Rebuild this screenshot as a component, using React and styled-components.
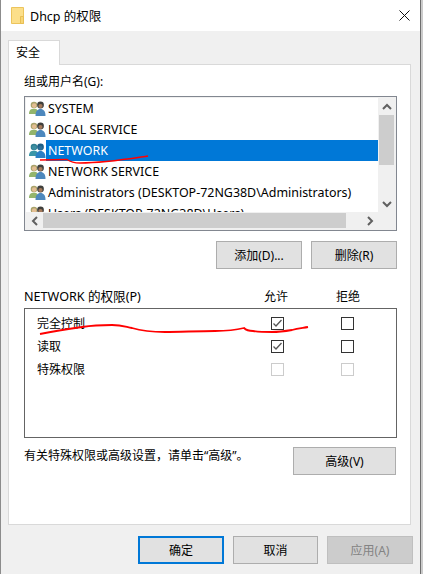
import React from "react";
import styled, { createGlobalStyle } from "styled-components";

const GlobalStyle = createGlobalStyle`
  html, body {
    margin: 0;
    padding: 0;
    background: #cbcbcb;
  }
  * {
    box-sizing: border-box;
  }
`;

const Dialog = styled.div`
  position: relative;
  width: 421px;
  height: 574px;
  overflow: hidden;
  display: flex;
  flex-direction: column;
  background: #f0f0f0;
  border-left: 1px solid #8c8c8c;
  border-right: 1px solid #6e6e6e;
  font-family: "Noto Sans", "Noto Sans CJK SC", sans-serif;
  font-size: 12px;
  color: #000;
`;

const TitleBar = styled.div`
  display: flex;
  align-items: center;
  height: 31px;
  padding: 0 10px 0 10px;
  background: #fff;
  font-size: 12.5px;
`;

const TitleText = styled.span`
  margin-left: 6px;
  flex: 1;
`;

const Body = styled.div`
  flex: 1;
  display: flex;
  flex-direction: column;
  padding: 9px 9px 0 7px;
`;

const TabStrip = styled.div`
  display: flex;
  height: 25px;
  margin-bottom: -1px;
`;

const Tab = styled.div`
  width: 52px;
  padding: 2px 0 0 7px;
  background: #fff;
  border: 1px solid #d9d9d9;
  border-bottom: none;
  position: relative;
  z-index: 1;
`;

const Panel = styled.div`
  height: 461px;
  display: flex;
  flex-direction: column;
  padding: 8px 13px 0 15px;
  background: #fff;
  border: 1px solid #d9d9d9;
`;

const FieldLabel = styled.div`
  height: 23px;
  line-height: 17px;
`;

const UserList = styled.div`
  height: 135px;
  width: 373px;
  display: grid;
  grid-template-columns: 1fr 17px;
  grid-template-rows: 1fr 17px;
  padding: 1px;
  border: 1px solid #828790;
  background: #f0f0f0;
`;

const Rows = styled.div`
  overflow: hidden;
  background: #fff;
`;

const UserRow = styled.div`
  display: flex;
  align-items: center;
  height: 21px;
  padding-left: 3px;
  white-space: nowrap;
`;

const UserName = styled.span`
  flex: 1;
  height: 21px;
  line-height: 21px;
  padding-left: 2px;
  font-size: 12.45px;
  color: ${(p) => (p.$selected ? "#fff" : "#000")};
  background: ${(p) => (p.$selected ? "#0078d7" : "transparent")};
`;

const VScroll = styled.div`
  display: flex;
  flex-direction: column;
  align-items: center;
  background: #f0f0f0;
`;

const HScroll = styled.div`
  display: flex;
  align-items: center;
  background: #f0f0f0;
`;

const ScrollArrow = styled.div`
  flex: none;
  width: 17px;
  height: 17px;
  display: flex;
  align-items: center;
  justify-content: center;
`;

const VThumb = styled.div`
  width: 15px;
  height: 50px;
  background: #cdcdcd;
`;

const HThumb = styled.div`
  width: 303px;
  height: 15px;
  background: #cdcdcd;
`;

const Spacer = styled.div`
  flex: 1;
`;

const ButtonRow = styled.div`
  display: flex;
  justify-content: flex-end;
  gap: 9px;
  width: 373px;
  margin-top: 10px;
`;

const Button = styled.div`
  flex: none;
  width: ${(p) => p.$width || 86}px;
  height: 28px;
  display: flex;
  align-items: center;
  justify-content: center;
  background: ${(p) => (p.$disabled ? "#cccccc" : "#e1e1e1")};
  color: ${(p) => (p.$disabled ? "#838383" : "#000")};
  border: ${(p) =>
    p.$default
      ? "2px solid #0078d7"
      : p.$disabled
        ? "1px solid #bfbfbf"
        : "1px solid #adadad"};
`;

const PermHeader = styled.div`
  display: grid;
  grid-template-columns: 1fr 72px 72px 13px;
  width: 373px;
  height: 21px;
  margin-top: 18px;
  padding-top: 1px;
  line-height: 17px;
`;

const PermTitle = styled.span`
  font-size: 12.6px;
  white-space: nowrap;
`;

const ColTitle = styled.span`
  text-align: center;
`;

const PermBox = styled.div`
  width: 373px;
  height: 130px;
  padding-top: 3px;
  border: 1px solid #646464;
`;

const PermRow = styled.div`
  display: grid;
  grid-template-columns: 1fr 13px 13px;
  column-gap: 57px;
  align-items: center;
  height: 23px;
  padding: 0 42px 0 12px;
`;

const PermName = styled.span`
  line-height: 17px;
  margin-top: -1px;
`;

const CheckBox = styled.div`
  width: 13px;
  height: 13px;
  display: flex;
  align-items: center;
  justify-content: center;
  background: #fff;
  border: 1px solid ${(p) => (p.$disabled ? "#cccccc" : "#333333")};
`;

const HelpRow = styled.div`
  display: flex;
  justify-content: space-between;
  width: 372px;
  margin-top: 9px;
`;

const HelpText = styled.span`
  line-height: 17px;
`;

const Footer = styled.div`
  display: flex;
  justify-content: flex-end;
  gap: 9px;
  margin: 11px -2px 0 0;
`;

const Scribbles = styled.svg`
  position: absolute;
  left: -1px;
  top: 0;
  pointer-events: none;
`;

function FolderIcon() {
  return (
    <svg width="13" height="17" viewBox="0 0 13 17">
      <path d="M.5.5h12v16H.5z" fill="#fcdf8a" stroke="#ecc45c" />
      <path d="M9.5 9.5h3v7h-3z" fill="#f8d675" stroke="#e8bf55" />
    </svg>
  );
}

function CloseIcon() {
  return (
    <svg width="11" height="11" viewBox="0 0 11 11">
      <path d="M.5.5l10 10M10.5.5l-10 10" stroke="#111" strokeWidth="1" fill="none" />
    </svg>
  );
}

function Users({ selected }) {
  const hair = selected ? "#2f7f92" : "#a8a26a";
  const face = selected ? "#3f8fa2" : "#e3bd92";
  const backBody = selected ? "#3a96a8" : "#93b56c";
  const frontHair = selected ? "#1d5f86" : "#3f3f3c";
  const frontFace = selected ? "#2c6f98" : "#a5795a";
  const frontBody = selected ? "#2a7fc4" : "#4d88bd";
  return (
    <svg width="17" height="15" viewBox="0 0 17 15">
      <circle cx="5" cy="4" r="3.3" fill={hair} />
      <circle cx="5.2" cy="4.6" r="2.3" fill={face} />
      <path d="M0 13c0-4 2-5.2 5-5.2s4 1.2 4 5.2z" fill={backBody} />
      <circle cx="11.5" cy="4" r="3.4" fill={frontHair} />
      <circle cx="11.5" cy="5" r="2.1" fill={frontFace} />
      <path d="M6.5 15c0-5 2-7 5-7s5 2 5 7z" fill={frontBody} />
    </svg>
  );
}

function Chevron({ dir }) {
  const paths = {
    up: "M1 6l4-4 4 4",
    down: "M1 2l4 4 4-4",
    left: "M6 1L2 5l4 4",
    right: "M2 1l4 4-4 4",
  };
  const vertical = dir === "up" || dir === "down";
  return (
    <svg
      width={vertical ? 10 : 8}
      height={vertical ? 8 : 10}
      viewBox={vertical ? "0 0 10 8" : "0 0 8 10"}
    >
      <path d={paths[dir]} stroke="#606060" strokeWidth="2" fill="none" />
    </svg>
  );
}

function Check() {
  return (
    <svg width="11" height="11" viewBox="0 0 11 11">
      <path d="M1.5 5.5l2.5 2.5 5.5-6" stroke="#555" strokeWidth="1.3" fill="none" />
    </svg>
  );
}

const users = [
  "SYSTEM",
  "LOCAL SERVICE",
  "NETWORK",
  "NETWORK SERVICE",
  "Administrators (DESKTOP-72NG38D\\Administrators)",
  "Users (DESKTOP-72NG38D\\Users)",
];

const permissions = [
  { name: "完全控制", allow: true, deny: false },
  { name: "读取", allow: true, deny: false },
  { name: "特殊权限", disabled: true },
];

export default function App() {
  return (
    <Dialog>
      <GlobalStyle />
      <TitleBar>
        <FolderIcon />
        <TitleText>Dhcp 的权限</TitleText>
        <CloseIcon />
      </TitleBar>
      <Body>
        <TabStrip>
          <Tab>安全</Tab>
        </TabStrip>
        <Panel>
          <FieldLabel>组或用户名(G):</FieldLabel>
          <UserList>
            <Rows>
              {users.map((name) => (
                <UserRow key={name}>
                  <Users selected={name === "NETWORK"} />
                  <UserName $selected={name === "NETWORK"}>{name}</UserName>
                </UserRow>
              ))}
            </Rows>
            <VScroll>
              <ScrollArrow>
                <Chevron dir="up" />
              </ScrollArrow>
              <VThumb />
              <Spacer />
              <ScrollArrow>
                <Chevron dir="down" />
              </ScrollArrow>
            </VScroll>
            <HScroll>
              <ScrollArrow>
                <Chevron dir="left" />
              </ScrollArrow>
              <HThumb />
              <Spacer />
              <ScrollArrow>
                <Chevron dir="right" />
              </ScrollArrow>
            </HScroll>
          </UserList>
          <ButtonRow>
            <Button>添加(D)...</Button>
            <Button>删除(R)</Button>
          </ButtonRow>
          <PermHeader>
            <PermTitle>NETWORK 的权限(P)</PermTitle>
            <ColTitle>允许</ColTitle>
            <ColTitle>拒绝</ColTitle>
          </PermHeader>
          <PermBox>
            {permissions.map((perm) => (
              <PermRow key={perm.name}>
                <PermName>{perm.name}</PermName>
                <CheckBox $disabled={perm.disabled}>{perm.allow && <Check />}</CheckBox>
                <CheckBox $disabled={perm.disabled}>{perm.deny && <Check />}</CheckBox>
              </PermRow>
            ))}
          </PermBox>
          <HelpRow>
            <HelpText>有关特殊权限或高级设置，请单击“高级”。</HelpText>
            <Button $width={103}>高级(V)</Button>
          </HelpRow>
        </Panel>
        <Footer>
          <Button $default>确定</Button>
          <Button $width={85}>取消</Button>
          <Button $disabled>应用(A)</Button>
        </Footer>
      </Body>
      <Scribbles width="423" height="574" viewBox="0 0 423 574">
        <path
          d="M40 160L67 159.5Q72 163 80 163C105 163 128 159 148 156"
          stroke="#f00"
          strokeWidth="1.4"
          fill="none"
        />
        <path
          d="M40 334C55 331 68 329 82 327C95 325 104 325 112 325C122 325 126 327 132 328C142 331 152 332 165 332C180 332 198 331 215 331C225 331 236 330 244 328C246 330 249 331 253 331C260 332 266 332 272 332C280 332 286 331 292 330C298 328 303 328 308 327"
          stroke="#f00"
          strokeWidth="1.8"
          fill="none"
        />
      </Scribbles>
    </Dialog>
  );
}
